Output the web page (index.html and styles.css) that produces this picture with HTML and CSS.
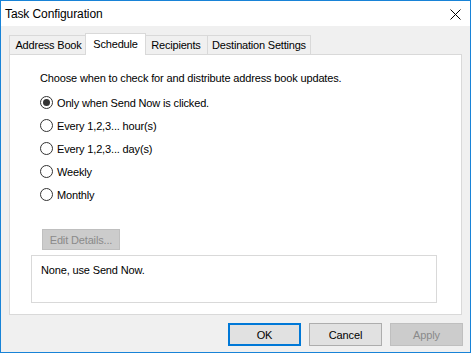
FILE: index.html
```html
<!DOCTYPE html>
<html lang="en">
<head>
    <meta charset="UTF-8">
    <title>Task Configuration</title>
    <link rel="stylesheet" href="styles.css">
</head>
<body>
    <div class="window">
        <div class="titlebar">
            <span class="title">Task Configuration</span>
            <svg class="close" width="11" height="11" viewBox="0 0 11 11">
                <path d="M0.5 0.5 L10.5 10.5 M10.5 0.5 L0.5 10.5" stroke="#000" stroke-width="1" fill="none"/>
            </svg>
        </div>
        <div class="tabs">
            <div class="tab tab-address">Address Book</div>
            <div class="tab tab-schedule active">Schedule</div>
            <div class="tab tab-recipients">Recipients</div>
            <div class="tab tab-destination">Destination Settings</div>
        </div>
        <div class="panel">
            <p class="intro">Choose when to check for and distribute address book updates.</p>
            <div class="options">
                <label class="option"><span class="radio checked"></span>Only when Send Now is clicked.</label>
                <label class="option"><span class="radio"></span>Every 1,2,3... hour(s)</label>
                <label class="option"><span class="radio"></span>Every 1,2,3... day(s)</label>
                <label class="option"><span class="radio"></span>Weekly</label>
                <label class="option"><span class="radio"></span>Monthly</label>
            </div>
            <button class="btn edit" disabled>Edit Details...</button>
            <div class="summary">None, use Send Now.</div>
        </div>
        <div class="actions">
            <button class="btn default">OK</button>
            <button class="btn">Cancel</button>
            <button class="btn" disabled>Apply</button>
        </div>
    </div>
</body>
</html>
```

FILE: styles.css
```css
body {
    margin: 0;
    font-family: "Liberation Sans", Arial, sans-serif;
    background-color: #ffffff;
}
.window {
    width: 471px;
    height: 353px;
    box-sizing: border-box;
    border: 1px solid #1883d7;
    background-color: #f0f0f0;
    display: flex;
    flex-direction: column;
}
.titlebar {
    height: 25px;
    background-color: #ffffff;
    display: flex;
    align-items: center;
    justify-content: space-between;
    padding-left: 4px;
}
.titlebar .title {
    font-size: 12px;
    color: #000;
    letter-spacing: -0.1px;
}
.titlebar .close {
    margin-right: 9px;
    margin-top: 1px;
}
.tabs {
    height: 28px;
    box-sizing: border-box;
    display: flex;
    align-items: flex-end;
    padding-left: 8px;
}
.tab {
    height: 19px;
    box-sizing: border-box;
    border: 1px solid #d9d9d9;
    border-bottom: none;
    background-color: #f0f0f0;
    font-size: 11px;
    letter-spacing: -0.2px;
    display: flex;
    align-items: center;
    justify-content: center;
    color: #000;
}
.tab + .tab {
    margin-left: -1px;
}
.tab-address { width: 79px; }
.tab-schedule { width: 57px; }
.tab-recipients { width: 64px; }
.tab-destination { width: 104px; }
.tab.active {
    height: 22px;
    width: 61px;
    margin: 0 -2px -1px -3px;
    padding-bottom: 2px;
    background-color: #ffffff;
    position: relative;
    z-index: 1;
}
.tab.active + .tab {
    margin-left: 0;
}
.panel {
    height: 261px;
    box-sizing: border-box;
    margin: 0 8px;
    border: 1px solid #d9d9d9;
    background-color: #ffffff;
    padding: 15px 0 0 21px;
    display: flex;
    flex-direction: column;
    align-items: flex-start;
}
.intro {
    margin: 0 0 5px 9px;
    font-size: 11px;
    line-height: 16px;
    letter-spacing: -0.15px;
}
.options {
    margin-left: 9px;
    display: flex;
    flex-direction: column;
}
.option {
    height: 23px;
    display: flex;
    align-items: center;
    font-size: 11px;
    letter-spacing: -0.15px;
}
.radio {
    width: 13px;
    height: 13px;
    box-sizing: border-box;
    border: 1px solid #333333;
    border-radius: 50%;
    margin-right: 4px;
    display: flex;
    align-items: center;
    justify-content: center;
}
.radio.checked::after {
    content: "";
    width: 7px;
    height: 7px;
    border-radius: 50%;
    background-color: #333333;
}
.btn {
    width: 73px;
    height: 23px;
    box-sizing: border-box;
    border: 1px solid #adadad;
    background-color: #e1e1e1;
    font-family: "Liberation Sans", Arial, sans-serif;
    font-size: 11px;
    letter-spacing: -0.15px;
    color: #000;
    padding: 0;
}
.btn:disabled {
    background-color: #cccccc;
    border-color: #bfbfbf;
    color: #8a8a8a;
}
.btn.default {
    border: 2px solid #0078d7;
}
.edit {
    width: 78px;
    height: 21px;
    margin: 23px 0 0 11px;
}
.summary {
    width: 406px;
    height: 48px;
    box-sizing: border-box;
    margin-top: 5px;
    border: 1px solid #d9d9d9;
    padding: 6px 0 0 9px;
    font-size: 11px;
    line-height: 16px;
    letter-spacing: -0.15px;
}
.actions {
    display: flex;
    justify-content: flex-end;
    gap: 8px;
    padding: 8px 7px 0 0;
}
```
